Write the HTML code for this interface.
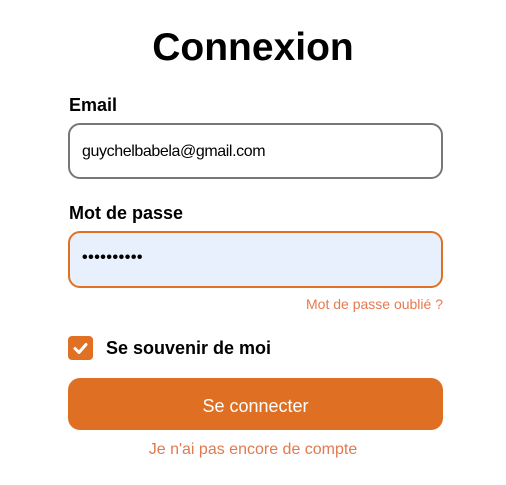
<!DOCTYPE html>
<html><head><style>
body{margin:0;width:506px;height:485px;background:#fff;font-family:"Liberation Sans",sans-serif;position:relative;overflow:hidden}
.a{position:absolute}
h1{position:absolute;left:0;width:506px;text-align:center;top:23px;margin:0;font-size:39px;font-weight:bold;line-height:50px}
.lbl{font-size:18px;font-weight:bold;left:69px}
.in{left:68px;border-radius:12px;box-sizing:border-box;width:375px}
</style></head><body>
<h1>Connexion</h1>
<div class="a lbl" style="top:95px">Email</div>
<div class="a in" style="top:123px;height:56px;border:2px solid #777"></div>
<div class="a" style="left:82px;top:143px;font-size:16px;letter-spacing:-0.4px">guychelbabela@gmail.com</div>
<div class="a lbl" style="top:203px">Mot de passe</div>
<div class="a in" style="top:231px;height:57px;border:2px solid #e07024;background:#e8f0fe"></div>
<div class="a" style="left:82px;top:249px;font-size:16px;font-weight:bold;letter-spacing:0.5px">••••••••••</div>
<div class="a" style="right:63px;top:296px;font-size:14px;color:#e67a4f">Mot de passe oublié ?</div>
<div class="a" style="left:68px;top:336px;width:25px;height:24px;border-radius:4px;background:#e07024"></div>
<svg class="a" style="left:68px;top:336px" width="25" height="24"><path d="M7 12.5l4 4 7-8" stroke="#fff" stroke-width="3" fill="none" stroke-linecap="round" stroke-linejoin="round"/></svg>
<div class="a" style="left:106px;top:338px;font-size:18px;font-weight:bold">Se souvenir de moi</div>
<div class="a" style="left:68px;top:378px;width:375px;height:52px;border-radius:12px;background:#df6f22;color:#fff;font-size:18px;text-align:center;line-height:56px">Se connecter</div>
<div class="a" style="left:0;width:506px;text-align:center;top:441px;font-size:16px;color:#e07a4f">Je n'ai pas encore de compte</div>
</body></html>
